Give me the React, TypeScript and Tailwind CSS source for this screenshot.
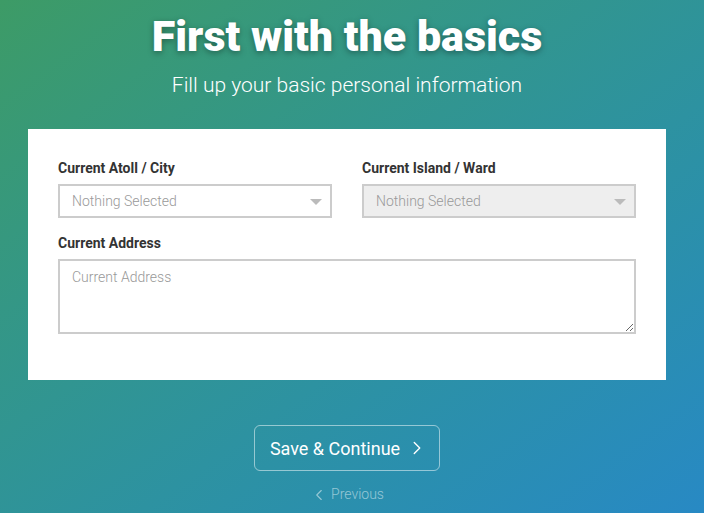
import { ChevronLeft, ChevronRight } from 'lucide-react';

function SelectBox({ disabled }: { disabled?: boolean }) {
  return (
    <div
      className={`flex h-[34px] items-center justify-between border-2 border-[#cccccc] pl-[12px] pr-[8px] ${
        disabled ? 'bg-[#eeeeee]' : 'bg-white'
      }`}
    >
      <span className="text-[14px] font-light text-[#999999]">Nothing Selected</span>
      <span className="mt-[2px] h-0 w-0 border-x-[6px] border-t-[6px] border-x-transparent border-t-[#bbbbbb]" />
    </div>
  );
}

export default function App() {
  return (
    <div
      className="flex h-[513px] w-full flex-col items-center overflow-hidden bg-gradient-to-br from-[#3d9b66] to-[#2889c4] pr-[10px] text-white"
      style={{ fontFamily: 'Roboto, "Liberation Sans", sans-serif' }}
    >
      <h1 className="mt-[9px] text-[43px] font-black leading-[54px] [text-shadow:0_2px_6px_rgba(0,0,0,0.35)]">
        First with the basics
      </h1>
      <p className="mt-[9px] text-[21px] font-light leading-[26px]">
        Fill up your basic personal information
      </p>

      <div className="mt-[31px] w-[638px] bg-white px-[30px] pb-[46px] pt-[30px]">
        <div className="grid grid-cols-2 gap-x-[30px]">
          <div>
            <label className="block text-[14px] font-bold leading-[18px] text-[#333333]">
              Current Atoll / City
            </label>
            <div className="mt-[7px]">
              <SelectBox />
            </div>
          </div>
          <div>
            <label className="block text-[14px] font-bold leading-[18px] text-[#333333]">
              Current Island / Ward
            </label>
            <div className="mt-[7px]">
              <SelectBox disabled />
            </div>
          </div>
        </div>
        <label className="mt-[16px] block text-[14px] font-bold leading-[18px] text-[#333333]">
          Current Address
        </label>
        <textarea
          placeholder="Current Address"
          className="mt-[7px] block h-[75px] w-full border-2 border-[#cccccc] px-[12px] py-[6px] text-[14px] font-light text-[#333333] outline-none placeholder:text-[#999999]"
        />
      </div>

      <button
        type="button"
        className="mt-[45px] flex h-[46px] w-[186px] items-center justify-center gap-[6px] rounded-[6px] border border-white/50 pl-[4px] text-[18px]"
      >
        Save &amp; Continue
        <ChevronRight size={22} strokeWidth={1.5} />
      </button>
      <button
        type="button"
        className="mt-[13px] flex items-center gap-[3px] text-[14px] font-light text-white/50"
      >
        <ChevronLeft size={18} strokeWidth={1.5} />
        Previous
      </button>
    </div>
  );
}
